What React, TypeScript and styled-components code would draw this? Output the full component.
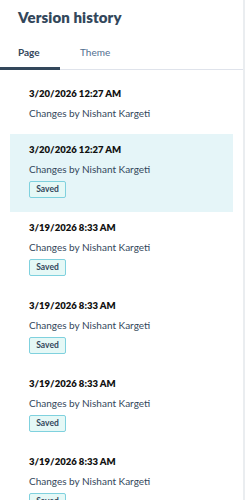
import React from "react"
import styled, { createGlobalStyle } from "styled-components"

const GlobalStyle = createGlobalStyle`
  body {
    margin: 0;
    background: #fff;
    font-family: "Lato", "Liberation Sans", sans-serif;
    color: #33475b;
  }
`

const Panel = styled.div`
  width: 245px;
  height: 500px;
  box-sizing: border-box;
  border-right: 2px solid #eaedf0;
  overflow: hidden;
`
const Heading = styled.h1`
  margin: 0;
  padding: 7px 18px 0;
  font-size: 15px;
  line-height: 20px;
  font-weight: 800;
  letter-spacing: 0.1px;
  color: #33475b;
`
const Tabs = styled.div`
  display: flex;
  margin-top: 19px;
  border-bottom: 1px solid #dfe3eb;
`
const Tab = styled.div<{ $active?: boolean }>`
  width: ${p => (p.$active ? "60px" : "auto")};
  box-sizing: border-box;
  height: 24px;
  font-size: 10px;
  font-weight: ${p => (p.$active ? 700 : 400)};
  color: ${p => (p.$active ? "#33475b" : "#516f90")};
  border-bottom: 3px solid ${p => (p.$active ? "#33475b" : "transparent")};
  margin-bottom: -1px;
  border-radius: 0 2px 0 0;
`
const List = styled.div`
  padding: 8px 10px 0;
`
const Item = styled.div<{ $selected?: boolean }>`
  padding: 9px 19px 14px;
  background: ${p => (p.$selected ? "#e5f5f8" : "transparent")};
`
const Date = styled.div`
  font-size: 9.5px;
  line-height: 14px;
  font-weight: 800;
  color: #111;
`
const Author = styled.div`
  margin-top: 5px;
  font-size: 10px;
  line-height: 14px;
  color: #33475b;
`
const Badge = styled.span`
  display: inline-block;
  margin: 4px 0 0;
  width: 37px;
  height: 17px;
  box-sizing: border-box;
  border: 1px solid #7fd1de;
  background: #e5f8f6;
  border-radius: 2px;
  font-size: 8.5px;
  line-height: 15px;
  font-weight: 700;
  text-align: center;
  color: #33475b;
`

const versions = [
  { date: "3/20/2026 12:27 AM", saved: false },
  { date: "3/20/2026 12:27 AM", saved: true, selected: true },
  { date: "3/19/2026 8:33 AM", saved: true },
  { date: "3/19/2026 8:33 AM", saved: true },
  { date: "3/19/2026 8:33 AM", saved: true },
  { date: "3/19/2026 8:33 AM", saved: true },
]

const App = () => (
  <>
    <GlobalStyle />
    <Panel>
      <Heading>Version history</Heading>
      <Tabs>
        <Tab $active style={{ paddingLeft: 18 }}>Page</Tab>
        <Tab style={{ paddingLeft: 20 }}>Theme</Tab>
      </Tabs>
      <List>
        {versions.map((v, i) => (
          <Item key={i} $selected={v.selected}>
            <Date>{v.date}</Date>
            <Author>Changes by Nishant Kargeti</Author>
            {v.saved ? <Badge>Saved</Badge> : null}
          </Item>
        ))}
      </List>
    </Panel>
  </>
)

export default App
